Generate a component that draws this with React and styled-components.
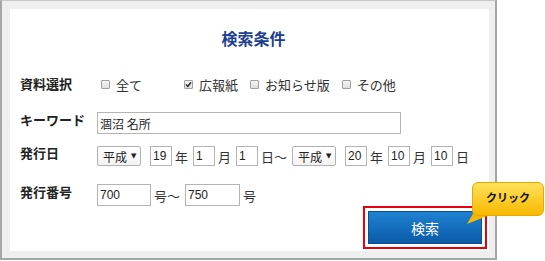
import React from "react";
import styled, { createGlobalStyle } from "styled-components";

const Global = createGlobalStyle`
  html, body { margin: 0; padding: 0; background: #fff; }
  body { font-family: "Liberation Sans", "Noto Sans CJK JP", sans-serif; color: #222; }
`;

const Frame = styled.div`
  position: relative;
  box-sizing: border-box;
  width: 497px;
  height: 260px;
  border: 2px solid #a6a6a6;
  border-top: 1px solid #c8c8c8;
  background: #efefef;
  padding: 8px 6px 7px 8px;
`;

const Panel = styled.div`
  background: #fff;
  height: 100%;
  box-sizing: border-box;
  padding: 17px 2px 0 10px;
  display: flex;
  flex-direction: column;
`;

const Title = styled.h2`
  margin: 0;
  text-align: center;
  font-family: "Noto Sans CJK JP", sans-serif;
  font-size: 16px;
  line-height: 24px;
  font-weight: 700;
  color: #1d3f8f;
`;

const Row = styled.div`
  display: flex;
  align-items: center;
  height: 22px;
  margin-top: ${(p) => p.$mt}px;
  white-space: nowrap;
`;

const Label = styled.div`
  width: 77px;
  flex: none;
  font-family: "Noto Sans CJK JP", sans-serif;
  font-size: 13px;
  font-weight: 700;
  color: #222;
  line-height: 18px;
  margin-top: ${(p) => (p.$lift ? -6 : 0)}px;
`;

const Check = styled.label`
  display: flex;
  align-items: center;
  gap: 6px;
  font-family: "Noto Sans CJK JP", sans-serif;
  font-size: 13px;
  color: #333;
  margin-left: ${(p) => (p.$first ? 4 : 0)}px;
  min-width: ${(p) => (p.$wide ? 83 : 0)}px;
  margin-right: ${(p) => (p.$wide ? 0 : 12)}px;
`;

const Box = styled.span`
  position: relative;
  box-sizing: border-box;
  width: 9px;
  height: 9px;
  border: 1px solid #a0a0a0;
  border-radius: 1px;
  background: linear-gradient(#f4f4f4, #dedede);
  display: inline-flex;
  align-items: center;
  justify-content: center;
`;

const Field = styled.div`
  box-sizing: border-box;
  width: ${(p) => p.$w}px;
  height: ${(p) => p.$h || 20}px;
  border: 1px solid #b4b4b4;
  background: #fff;
  padding: 0 2px;
  display: flex;
  align-items: center;
  font-family: ${(p) =>
    p.$jp ? '"Noto Sans CJK JP", sans-serif' : '"Liberation Sans", "Noto Sans CJK JP", sans-serif'};
  font-size: 12px;
  color: #222;
  margin-right: ${(p) => (p.$mr ?? 3)}px;
  flex: none;
`;

const Select = styled.div`
  box-sizing: border-box;
  width: 44px;
  height: 20px;
  border: 1px solid #b0b0b0;
  border-radius: 2px;
  background: linear-gradient(#fff, #f3f3f3);
  display: flex;
  align-items: center;
  padding-left: 5px;
  gap: 4px;
  font-family: "Noto Sans CJK JP", sans-serif;
  font-size: 12px;
  color: #222;
  margin-right: 9px;
  flex: none;
  white-space: nowrap;
  overflow: hidden;
`;

const Arrow = styled.span`
  font-family: "DejaVu Sans", sans-serif;
  font-size: 7px;
  color: #222;
`;

const Unit = styled.span`
  font-family: "Noto Sans CJK JP", sans-serif;
  font-size: 13px;
  color: #333;
  margin-right: ${(p) => (p.$mr ?? 5)}px;
  flex: none;
`;

const ButtonRow = styled.div`
  display: flex;
  justify-content: flex-end;
`;

const Highlight = styled.div`
  border: 2px solid #e8000b;
  padding: 3px;
  background: #fff;
`;

const SearchButton = styled.button`
  box-sizing: border-box;
  width: 114px;
  height: 33px;
  border: 1px solid #0b4d92;
  background: linear-gradient(#1e82d2, #0b5ba8);
  color: #fff;
  font-family: "Noto Sans CJK JP", sans-serif;
  font-size: 14px;
  padding: 0;
  cursor: pointer;
`;

const Tooltip = styled.div`
  position: absolute;
  left: 470px;
  top: 181px;
  width: 72px;
  height: 34px;
`;

const Bubble = styled.div`
  position: relative;
  box-sizing: border-box;
  width: 100%;
  height: 100%;
  border: 1px solid #e9a800;
  border-radius: 6px;
  background: linear-gradient(#ffe15c, #f7b900);
  display: flex;
  align-items: center;
  justify-content: center;
  font-family: "Noto Sans CJK JP", sans-serif;
  font-size: 11px;
  font-weight: 700;
  color: #111;
  padding-bottom: 4px;
`;

const Tail = styled.svg`
  position: absolute;
  left: -5px;
  top: 26px;
  overflow: visible;
`;

function CheckItem({ label, checked, first, wide }) {
  return (
    <Check $first={first} $wide={wide}>
      <Box>
        {checked && (
          <svg width="7" height="7" viewBox="0 0 7 7">
            <path d="M1 3.6 L2.8 5.4 L6 1.3" fill="none" stroke="#222" strokeWidth="1.4" />
          </svg>
        )}
      </Box>
      {label}
    </Check>
  );
}

export default function App() {
  return (
    <>
      <Global />
      <Frame>
        <Panel>
          <Title>検索条件</Title>
          <Row $mt={23}>
            <Label>資料選択</Label>
            <CheckItem label="全て" first wide />
            <CheckItem label="広報紙" checked />
            <CheckItem label="お知らせ版" />
            <CheckItem label="その他" />
          </Row>
          <Row $mt={17}>
            <Label $lift>キーワード</Label>
            <Field $w={304} $h={22} $jp>
              涸沼 名所
            </Field>
          </Row>
          <Row $mt={11}>
            <Label $lift>発行日</Label>
            <Select>平成<Arrow>▼</Arrow></Select>
            <Field $w={22}>19</Field>
            <Unit>年</Unit>
            <Field $w={22}>1</Field>
            <Unit>月</Unit>
            <Field $w={22}>1</Field>
            <Unit>日～</Unit>
            <Select>平成<Arrow>▼</Arrow></Select>
            <Field $w={22}>20</Field>
            <Unit>年</Unit>
            <Field $w={22}>10</Field>
            <Unit>月</Unit>
            <Field $w={22}>10</Field>
            <Unit>日</Unit>
          </Row>
          <Row $mt={17}>
            <Label $lift>発行番号</Label>
            <Field $w={54} $h={22}>700</Field>
            <Unit>号～</Unit>
            <Field $w={55} $h={22}>750</Field>
            <Unit>号</Unit>
          </Row>
          <ButtonRow>
            <Highlight>
              <SearchButton>検索</SearchButton>
            </Highlight>
          </ButtonRow>
        </Panel>
        <Tooltip>
          <Tail width="30" height="20">
            <polygon points="7,4 25,6 0,16" fill="#f6b700" />
          </Tail>
          <Bubble>クリック</Bubble>
        </Tooltip>
      </Frame>
    </>
  );
}
